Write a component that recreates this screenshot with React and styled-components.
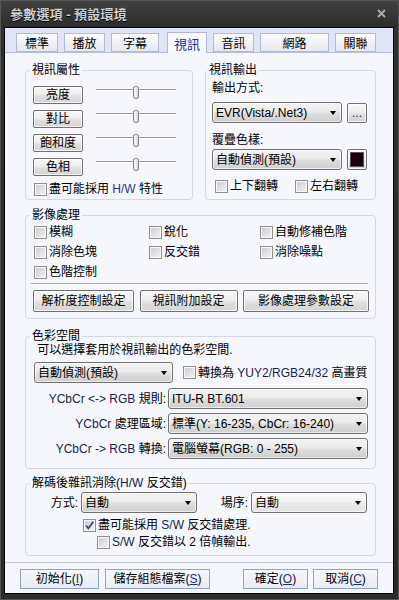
import React from 'react';
import styled, { createGlobalStyle } from 'styled-components';

const GlobalStyle = createGlobalStyle`
  html, body { margin: 0; padding: 0; background: #2a2a2a; }
  body {
    font-family: "Liberation Sans", "Noto Sans CJK TC", sans-serif;
    font-size: 12px;
    color: #000;
  }
  * { box-sizing: border-box; }
`;

const Window = styled.div`
  width: 399px;
  height: 600px;
  display: flex;
  flex-direction: column;
  padding: 0 5px 6px 4px;
  background: linear-gradient(#424242 0, #2c2c2c 27px, #303030 27px, #2b2b2b 100%);
  box-shadow: inset 0 0 0 1px #555;
`;

const TitleBar = styled.div`
  height: 27px;
  flex: none;
  display: flex;
  align-items: center;
  justify-content: space-between;
  padding: 0 8px 0 6px;
`;

const Title = styled.div`
  font-family: "Noto Sans CJK TC", sans-serif;
  font-size: 13px;
  font-weight: 700;
  color: #cfcfcf;
  text-shadow: 0 1px 0 #000;
  letter-spacing: 0.2px;
`;

const Client = styled.div`
  flex: 1;
  display: flex;
  flex-direction: column;
  border: 1px solid #050505;
  background: #f5f7fd;
`;

const TabStrip = styled.div`
  height: 25px;
  flex: none;
  display: flex;
  align-items: flex-end;
  padding-left: 11px;
  background: #dfe5f7;
  border-bottom: 1px solid #b3bddb;
`;

const Tab = styled.div`
  width: ${p => p.$w}px;
  height: ${p => (p.$active ? 21 : 19)}px;
  margin-right: 6px;
  margin-left: ${p => (p.$active ? 2 : 0)}px;
  margin-bottom: ${p => (p.$active ? -1 : 0)}px;
  border: 1px solid #b1bad6;
  border-bottom: ${p => (p.$active ? 'none' : '1px solid #b1bad6')};
  background: ${p => (p.$active ? '#f8f9fe' : 'linear-gradient(#fdfdfe, #e6e8ef)')};
  color: ${p => (p.$active ? '#1d2b95' : '#000')};
  font-size: ${p => (p.$active ? 13 : 12)}px;
  display: flex;
  align-items: center;
  justify-content: center;
  padding-top: ${p => (p.$active ? 1 : 0)}px;
`;

const Panel = styled.div`
  flex: 1;
  display: flex;
  flex-direction: column;
  padding: 10px 0 0 20px;
`;

const TopRow = styled.div`
  display: flex;
  gap: 12px;
`;

const Group = styled.fieldset`
  margin: ${p => p.$mt || 0}px 0 0 0;
  padding: 0;
  min-width: 0;
  width: ${p => p.$w}px;
  height: ${p => p.$h}px;
  flex: none;
  border: 1px solid #d3d8e6;
  border-radius: 4px;
`;

const Legend = styled.legend`
  margin-left: ${p => (p.$ml === undefined ? 4 : p.$ml)}px;
  padding: 0 2px;
  line-height: 14px;
  font-size: 12px;
`;

const Body = styled.div`
  display: flex;
  flex-direction: column;
  align-items: flex-start;
  padding: ${p => p.$pt || 0}px ${p => p.$pr || 0}px 0 ${p => p.$pl || 0}px;
`;

const SliderRow = styled.div`
  display: flex;
  align-items: flex-start;
  margin-bottom: 6px;
`;

const Btn = styled.button`
  width: ${p => p.$w}px;
  height: ${p => p.$h || 18}px;
  flex: none;
  margin: 0;
  padding: 0;
  font: inherit;
  font-size: 12px;
  color: ${p => p.$color || '#000'};
  border: 1px solid #707070;
  border-radius: 2px;
  background: linear-gradient(#f7f7f7, #eeeeee 45%, #e0e0e0 55%, #d4d4d4);
  box-shadow: inset 0 0 0 1px rgba(255, 255, 255, 0.75);
  display: flex;
  align-items: center;
  justify-content: center;
  line-height: 14px;
`;

const SliderSvg = styled.svg`
  margin-left: 13px;
  flex: none;
`;

const CheckRow = styled.label`
  display: flex;
  align-items: center;
  gap: 2px;
  height: 14px;
  line-height: 14px;
  white-space: nowrap;
  margin: ${p => p.$mt || 0}px 0 0 ${p => p.$ml || 0}px;
`;

const Box = styled.span`
  width: 13px;
  height: 13px;
  flex: none;
  border: 1px solid #8e8f8f;
  background: linear-gradient(135deg, #cbcbcb, #f4f4f4);
  box-shadow: inset 0 0 0 1px #f7f7f7;
  display: flex;
  align-items: center;
  justify-content: center;
`;

const Lat = styled.span`
  color: ${p => p.$c || '#181d4c'};
`;

const FieldLabel = styled.div`
  line-height: 14px;
  margin-top: ${p => p.$mt || 0}px;
`;

const Row = styled.div`
  display: flex;
  align-items: center;
  gap: ${p => p.$gap || 0}px;
  margin-top: ${p => p.$mt || 0}px;
  margin-left: ${p => p.$ml || 0}px;
  margin-right: ${p => p.$mr || 0}px;
  align-self: ${p => (p.$stretch ? 'stretch' : 'auto')};
  justify-content: ${p => p.$justify || 'flex-start'};
  overflow: ${p => (p.$clip ? 'hidden' : 'visible')};
`;

const SelectBox = styled.div`
  width: ${p => p.$w}px;
  height: 21px;
  flex: none;
  border: 1px solid #707070;
  border-radius: 3px;
  background: ${p => (p.$light
    ? 'linear-gradient(#fbfbfb, #f3f3f3 45%, #e9e9e9 55%, #e2e2e2)'
    : 'linear-gradient(#f3f3f3, #ebebeb 45%, #dddddd 55%, #cfcfcf)')};
  box-shadow: inset 0 0 0 1px rgba(255, 255, 255, 0.6);
  display: flex;
  align-items: center;
  justify-content: space-between;
  padding: 0 5px 0 3px;
  white-space: nowrap;
  overflow: hidden;
`;

const SelectText = styled.span`
  overflow: hidden;
  line-height: 14px;
`;

const Arrow = styled.span`
  flex: none;
  width: 0;
  height: 0;
  border-left: 3.5px solid transparent;
  border-right: 3.5px solid transparent;
  border-top: 4px solid #000;
  margin-left: 4px;
`;

const Swatch = styled.span`
  width: 14px;
  height: 15px;
  background: #1a0012;
  border: 1px solid #555;
`;

const Grid = styled.div`
  display: grid;
  grid-template-columns: 116px 111px 1fr;
  row-gap: 6px;
  align-self: stretch;
`;

const Separator = styled.div`
  width: 337px;
  height: 2px;
  margin: 4px 0 0 -2px;
  border-top: 1px solid #a9a9a9;
  border-bottom: 1px solid #ffffff;
`;

const ButtonBar = styled.div`
  width: 336px;
  display: flex;
  justify-content: space-between;
  margin-top: 5px;
`;

const RightLabel = styled.span`
  width: ${p => p.$w ? `${p.$w}px` : 'auto'};
  text-align: right;
  margin-right: ${p => p.$mr || 2}px;
  line-height: 14px;
  white-space: nowrap;
  flex: none;
`;

const Footer = styled.div`
  height: 31px;
  flex: none;
  border-top: 1px solid #c4cadc;
  display: flex;
  align-items: center;
  padding: 1px 15px 0 15px;
  gap: 6px;
`;

const FootBtn = styled.button`
  width: ${p => p.$w}px;
  height: 20px;
  margin: 0 0 0 ${p => p.$ml || 0}px;
  padding: 0;
  font: inherit;
  font-size: 12px;
  color: #000;
  border: 1px solid #8ea2d8;
  background: linear-gradient(#f7f8fc, #e9ecf6);
  display: flex;
  align-items: center;
  justify-content: center;
  line-height: 14px;
`;

const Mn = styled.span`
  color: #1b2a8c;
  text-decoration: underline;
`;

const Slider = () => (
  <SliderSvg width="82" height="14" viewBox="0 0 82 14">
    <line x1="0" y1="3.5" x2="80" y2="3.5" stroke="#9c9c9c" />
    <line x1="0" y1="4.5" x2="80" y2="4.5" stroke="#ffffff" />
    <defs>
      <linearGradient id="th" x1="0" y1="0" x2="1" y2="0">
        <stop offset="0" stopColor="#ffffff" />
        <stop offset="1" stopColor="#d6d6d6" />
      </linearGradient>
    </defs>
    <rect x="37.5" y="0.5" width="5" height="12" rx="2" fill="url(#th)" stroke="#777" />
  </SliderSvg>
);

const Check = ({ checked, children, mt, ml }) => (
  <CheckRow $mt={mt} $ml={ml}>
    <Box>
      {checked && (
        <svg width="11" height="11" viewBox="0 0 11 11">
          <path d="M2 5.5 L4.4 8.3 L9.3 1.8" fill="none" stroke="#3a4a7e" strokeWidth="1.8" />
        </svg>
      )}
    </Box>
    <span>{children}</span>
  </CheckRow>
);

const Select = ({ w, children, light }) => (
  <SelectBox $w={w} $light={light}>
    <SelectText>{children}</SelectText>
    <Arrow />
  </SelectBox>
);

const tabs = [
  { label: '標準', w: 42 },
  { label: '播放', w: 41 },
  { label: '字幕', w: 48 },
  { label: '視訊', w: 40, active: true },
  { label: '音訊', w: 41 },
  { label: '網路', w: 69 },
  { label: '關聯', w: 41 },
];

export default function App() {
  return (
    <>
      <GlobalStyle />
      <Window>
        <TitleBar>
          <Title>參數選項 - 預設環境</Title>
          <svg width="9" height="9" viewBox="0 0 9 9">
            <path d="M1 1 L8 8 M8 1 L1 8" stroke="#a8a8a8" strokeWidth="2" />
          </svg>
        </TitleBar>
        <Client>
          <TabStrip>
            {tabs.map(t => (
              <Tab key={t.label} $w={t.w} $active={t.active}>{t.label}</Tab>
            ))}
          </TabStrip>
          <Panel>
            <TopRow>
              <Group $w={168} $h={137}>
                <Legend>視訊屬性</Legend>
                <Body $pt={9} $pl={7}>
                  {['亮度', '對比', '飽和度', '色相'].map(l => (
                    <SliderRow key={l}>
                      <Btn $w={50}>{l}</Btn>
                      <Slider />
                    </SliderRow>
                  ))}
                  <Check ml={1}>盡可能採用 <Lat $c="#26309a">H/W</Lat> 特性</Check>
                </Body>
              </Group>
              <Group $w={171} $h={137}>
                <Legend $ml={1}>視訊輸出</Legend>
                <Body $pt={4} $pl={6}>
                  <FieldLabel>輸出方式:</FieldLabel>
                  <Row $mt={7} $gap={5}>
                    <Select w={130}>EVR(Vista/.Net3)</Select>
                    <Btn $w={20} $h={20} $color="#1c2470">...</Btn>
                  </Row>
                  <FieldLabel $mt={10}>覆疊色樣:</FieldLabel>
                  <Row $mt={2} $gap={5}>
                    <Select w={130}>自動偵測(預設)</Select>
                    <Btn $w={20} $h={21}><Swatch /></Btn>
                  </Row>
                  <Row $mt={9} $ml={3} $gap={0}>
                    <Check>上下翻轉</Check>
                    <Check ml={17}>左右翻轉</Check>
                  </Row>
                </Body>
              </Group>
            </TopRow>

            <Group $w={351} $h={111} $mt={8}>
              <Legend>影像處理</Legend>
              <Body $pt={3} $pl={7}>
                <Grid>
                  <Check ml={1}>模糊</Check>
                  <Check>銳化</Check>
                  <Check>自動修補色階</Check>
                  <Check ml={1}>消除色塊</Check>
                  <Check>反交錯</Check>
                  <Check>消除噪點</Check>
                  <Check ml={1}>色階控制</Check>
                </Grid>
                <Separator />
                <ButtonBar>
                  <Btn $w={101} $h={22}>解析度控制設定</Btn>
                  <Btn $w={98} $h={22}>視訊附加設定</Btn>
                  <Btn $w={126} $h={22}>影像處理參數設定</Btn>
                </ButtonBar>
              </Body>
            </Group>

            <Group $w={351} $h={140} $mt={10}>
              <Legend>色彩空間</Legend>
              <Body $pt={0} $pl={8} $pr={7}>
                <FieldLabel>&nbsp;可以選擇套用於視訊輸出的色彩空間.</FieldLabel>
                <Row $mt={5} $gap={10} $stretch $clip $mr={-6}>
                  <Select w={139}>自動偵測(預設)</Select>
                  <Check>轉換為 <Lat>YUY2/RGB24/32</Lat> 高畫質</Check>
                </Row>
                <Row $mt={5} $stretch $justify="flex-end">
                  <RightLabel><Lat>YCbCr &lt;-&gt; RGB</Lat> 規則:</RightLabel>
                  <Select w={200}>ITU-R BT.601</Select>
                </Row>
                <Row $mt={4} $stretch $justify="flex-end">
                  <RightLabel><Lat>YCbCr</Lat> 處理區域:</RightLabel>
                  <Select w={200}>標準(Y: 16-235, CbCr: 16-240)</Select>
                </Row>
                <Row $mt={4} $stretch $justify="flex-end">
                  <RightLabel><Lat>YCbCr -&gt; RGB</Lat> 轉換:</RightLabel>
                  <Select w={200}>電腦螢幕(RGB: 0 - 255)</Select>
                </Row>
              </Body>
            </Group>

            <Group $w={351} $h={80} $mt={7}>
              <Legend>解碼後雜訊消除(<Lat>H/W</Lat> 反交錯)</Legend>
              <Body $pt={2} $pl={8}>
                <Row>
                  <RightLabel $w={44} $mr={3}>方式:</RightLabel>
                  <Select w={116}>自動</Select>
                  <RightLabel $w={51} $mr={3}>場序:</RightLabel>
                  <Select w={116} light>自動</Select>
                </Row>
                <Check checked mt={5} ml={49}>盡可能採用 <Lat>S/W</Lat> 反交錯處理.</Check>
                <Check mt={3} ml={63}><Lat>S/W</Lat> 反交錯以 2 倍幀輸出.</Check>
              </Body>
            </Group>
          </Panel>
          <Footer>
            <FootBtn $w={79}>初始化(<Mn>I</Mn>)</FootBtn>
            <FootBtn $w={105}>儲存組態檔案(<Mn>S</Mn>)</FootBtn>
            <FootBtn $w={65} $ml={27}>確定(<Mn>O</Mn>)</FootBtn>
            <FootBtn $w={65} $ml={-1}>取消(<Mn>C</Mn>)</FootBtn>
          </Footer>
        </Client>
      </Window>
    </>
  );
}
